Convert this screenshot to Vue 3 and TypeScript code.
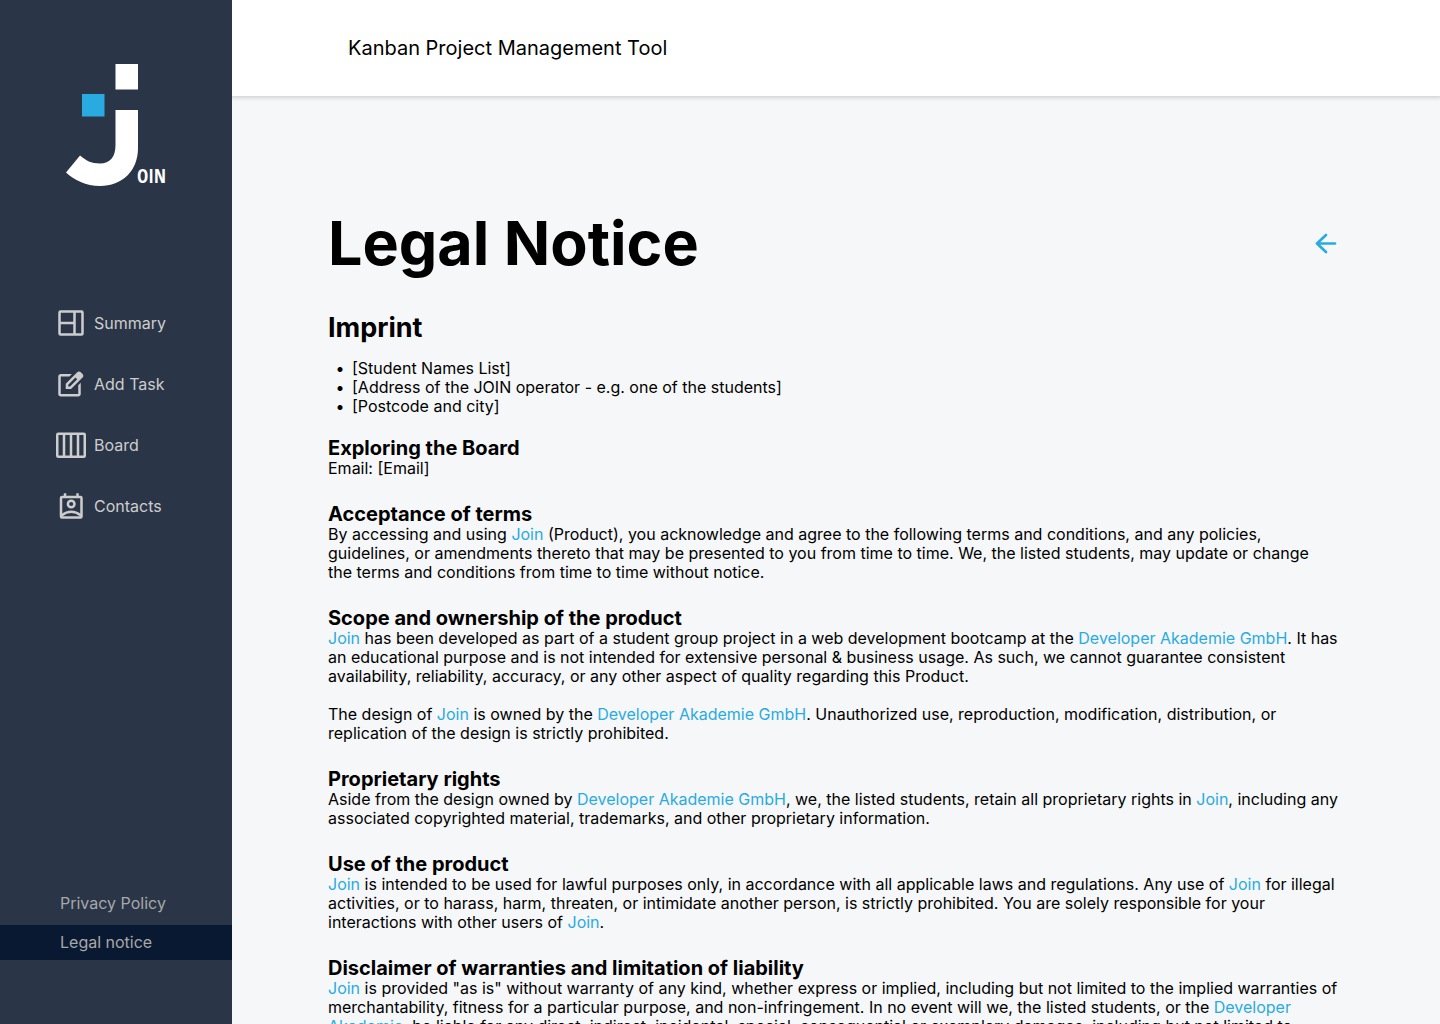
<script setup lang="ts">
import { ref } from 'vue'

type Segment = { text: string; kind?: 'brand' | 'link' }
type Section = { title: string; paragraphs: Segment[][] }

const t = (text: string): Segment => ({ text })
const join: Segment = { text: 'Join', kind: 'brand' }
const academy: Segment = { text: 'Developer Akademie GmbH', kind: 'link' }

const navItems = [
  { id: 'summary', label: 'Summary' },
  { id: 'task', label: 'Add Task' },
  { id: 'board', label: 'Board' },
  { id: 'contacts', label: 'Contacts' },
]

const legalItems = [
  { id: 'privacy', label: 'Privacy Policy' },
  { id: 'legal', label: 'Legal notice' },
]
const activeLegal = ref('legal')

const imprint = [
  '[Student Names List]',
  '[Address of the JOIN operator - e.g. one of the students]',
  '[Postcode and city]',
]

const sections: Section[] = [
  { title: 'Exploring the Board', paragraphs: [[t('Email: [Email]')]] },
  {
    title: 'Acceptance of terms',
    paragraphs: [[
      t('By accessing and using '), join,
      t(' (Product), you acknowledge and agree to the following terms and conditions, and any policies, guidelines, or amendments thereto that may be presented to you from time to time. We, the listed students, may update or change the\u00a0terms and conditions from time to time without notice.'),
    ]],
  },
  {
    title: 'Scope and ownership of the product',
    paragraphs: [
      [
        join,
        t(' has been developed as part of a student group project in a web development bootcamp at the '),
        academy,
        t('. It has an educational purpose and is not intended for extensive personal & business usage. As such, we cannot guarantee consistent availability, reliability, accuracy, or any other aspect of quality regarding this Product.'),
      ],
      [
        t('The design of '), join, t(' is owned by the '), academy,
        t('. Unauthorized use, reproduction, modification, distribution, or replication of the design is strictly prohibited.'),
      ],
    ],
  },
  {
    title: 'Proprietary rights',
    paragraphs: [[
      t('Aside from the design owned by '), academy,
      t(', we, the listed students, retain all proprietary rights in '), join,
      t(', including any associated copyrighted material, trademarks, and other proprietary information.'),
    ]],
  },
  {
    title: 'Use of the product',
    paragraphs: [[
      join,
      t(' is intended to be used for lawful purposes only, in accordance with all applicable laws and regulations. Any use of '),
      join,
      t(' for illegal activities, or to harass, harm, threaten, or intimidate another person, is strictly prohibited. You are solely responsible for your interactions with other users of '),
      join, t('.'),
    ]],
  },
  {
    title: 'Disclaimer of warranties and limitation of liability',
    paragraphs: [[
      join,
      t(' is provided "as is" without warranty of any kind, whether express or implied, including but not limited to the implied warranties of merchantability, fitness for a particular purpose, and non-infringement. In no event will we, the listed students, or the '),
      { text: 'Developer Akademie', kind: 'link' },
      t(', be liable for any direct, indirect, incidental, special, consequential or exemplary damages, including but not limited to'),
    ]],
  },
]
</script>

<template>
  <div class="app">
    <aside class="sidebar">
      <svg class="logo" viewBox="0 0 100 122" role="img" aria-label="Join">
        <rect x="49.5" y="0" width="22.5" height="25.5" fill="#fff" />
        <rect x="16" y="30" width="22.5" height="22.5" fill="#29abe2" />
        <path
          d="M49.5 46H72V84C72 107 56 122 34 122C20 122 8 116 0 108.500L14 91.500C20 96.500 25 99.500 34 99.500C44 99.500 49.500 93 49.500 81Z"
          fill="#fff"
        />
        <text x="71" y="119" class="logo-text">OIN</text>
      </svg>

      <nav class="nav" aria-label="Main">
        <a v-for="item in navItems" :key="item.id" class="nav-link" :href="'#' + item.id">
          <svg v-if="item.id === 'summary'" class="icon" viewBox="0 0 30 30">
            <rect x="3.500" y="3.500" width="23" height="23" rx="1" />
            <path d="M18.500 3.500V26.500M3.500 15H18.500" />
          </svg>
          <svg v-else-if="item.id === 'task'" class="icon solid" viewBox="48 -1000 960 960">
            <path
              d="M200-120q-33 0-56.500-23.500T120-200v-560q0-33 23.500-56.500T200-840h357l-80 80H200v560h560v-278l80-80v358q0 33-23.500 56.500T760-120H200ZM360-360v-170l367-367q12-12 27-18t30-6q16 0 30.500 6t26.500 18l56 57q11 12 17 26.500t6 29.500q0 15-5.500 29.500T897-728L530-360H360ZM440-440h56l232-232-28-28-29-28-231 231v57Z"
            />
          </svg>
          <svg v-else-if="item.id === 'board'" class="icon" viewBox="0 0 30 30">
            <rect x="1.250" y="3.750" width="27.500" height="23" rx="1" />
            <path d="M8 3.750V26.750M15 3.750V26.750M22 3.750V26.750" />
          </svg>
          <svg v-else class="icon" viewBox="0 0 30 30">
            <rect x="5" y="6" width="20.500" height="20.500" rx="1" />
            <path d="M9 2.200V6M21.500 2.200V6M5.500 24.500Q15.250 17 25 24.500" />
            <circle cx="15.200" cy="13" r="3.300" />
          </svg>
          <span>{{ item.label }}</span>
        </a>
      </nav>

      <nav class="legal-nav" aria-label="Legal">
        <a
          v-for="item in legalItems"
          :key="item.id"
          class="legal-link"
          :class="{ active: item.id === activeLegal }"
          :href="'#' + item.id"
          @click="activeLegal = item.id"
        >{{ item.label }}</a>
      </nav>
    </aside>

    <div class="page">
      <header class="topbar">Kanban Project Management Tool</header>

      <main class="content">
        <div class="title-row">
          <h1>Legal Notice</h1>
          <button class="back" type="button" aria-label="Back">
            <svg viewBox="0 0 32 32">
              <path d="M14 8L5 16.500L14 25M5 16.500H23" />
            </svg>
          </button>
        </div>

        <h2>Imprint</h2>
        <ul class="imprint">
          <li v-for="line in imprint" :key="line">{{ line }}</li>
        </ul>

        <section v-for="section in sections" :key="section.title" class="section">
          <h3>{{ section.title }}</h3>
          <p v-for="(paragraph, p) in section.paragraphs" :key="p">
            <template v-for="(part, i) in paragraph" :key="i"
              ><a v-if="part.kind === 'link'" class="accent" href="#academy">{{ part.text }}</a
              ><span v-else-if="part.kind === 'brand'" class="accent">{{ part.text }}</span
              ><template v-else>{{ part.text }}</template
            ></template>
          </p>
        </section>
      </main>
    </div>
  </div>
</template>

<style>
body {
  margin: 0;
  background: #f6f7f8;
}
</style>

<style scoped>
.app {
  display: flex;
  height: 100vh;
  overflow: hidden;
  font-family: Inter, "Liberation Sans", sans-serif;
  font-size: 16px;
  line-height: 19px;
  color: #000;
}

.sidebar {
  display: flex;
  flex: none;
  flex-direction: column;
  box-sizing: border-box;
  width: 232px;
  padding: 64px 0;
  background: #2a3647;
}

.logo {
  flex: none;
  align-self: center;
  width: 100px;
  height: 122px;
  overflow: visible;
}

.logo-text {
  fill: #fff;
  font-family: "Liberation Sans Narrow", "Open Sans Condensed", "Noto Sans Condensed", "Liberation Sans", sans-serif;
  font-size: 19px;
  font-weight: 700;
}

.nav {
  display: flex;
  flex-direction: column;
  gap: 15px;
  margin-top: 114px;
  line-height: 20px;
}

.nav-link {
  display: flex;
  align-items: center;
  gap: 8px;
  height: 46px;
  padding-left: 56px;
  color: #cdcdcd;
  text-decoration: none;
}

.icon {
  width: 30px;
  height: 30px;
  fill: none;
  stroke: #cdcdcd;
  stroke-width: 2.5;
}

.icon.solid {
  fill: #cdcdcd;
  stroke: none;
}

.legal-nav {
  display: flex;
  flex-direction: column;
  gap: 4px;
  margin-top: auto;
}

.legal-link {
  padding: 8px 60px;
  color: #a8a8a8;
  text-decoration: none;
}

.legal-link.active {
  background: #091931;
}

.page {
  display: flex;
  flex: 1;
  flex-direction: column;
  min-width: 0;
  background: #f6f7f8;
}

.topbar {
  z-index: 1;
  display: flex;
  flex: none;
  align-items: center;
  height: 96px;
  padding: 0 116px;
  background: #fff;
  box-shadow: 0 0 4px 2px rgba(0, 0, 0, 0.15);
  font-size: 20px;
  line-height: 24px;
  clip-path: inset(0 0 -10px 0);
}

.content {
  flex: 1;
  min-height: 0;
  padding: 110px 96px 0;
  overflow-y: auto;
  scrollbar-width: none;
}

.title-row {
  display: flex;
  align-items: center;
  justify-content: space-between;
}

h1,
h2,
h3,
p {
  margin: 0;
}

h1 {
  font-size: 61px;
  line-height: 74px;
}

h2 {
  margin: 31px 0 15px;
  font-size: 27px;
  line-height: 33px;
}

h3 {
  font-size: 20px;
  line-height: 22px;
}

.back {
  width: 32px;
  height: 32px;
  padding: 0;
  border: 0;
  background: none;
  cursor: pointer;
}

.back svg {
  display: block;
  width: 32px;
  height: 32px;
  fill: none;
  stroke: #29abe2;
  stroke-width: 2.7;
  stroke-linecap: round;
  stroke-linejoin: round;
}

.imprint {
  margin: 0 0 21px;
  padding: 0;
  list-style: none;
}

.imprint li {
  display: flex;
}

.imprint li::before {
  flex: none;
  width: 24px;
  text-align: center;
  content: "•";
}

.section {
  margin-bottom: 25px;
}

p + p {
  margin-top: 19px;
}

.accent {
  color: #29abe2;
  text-decoration: none;
}
</style>
